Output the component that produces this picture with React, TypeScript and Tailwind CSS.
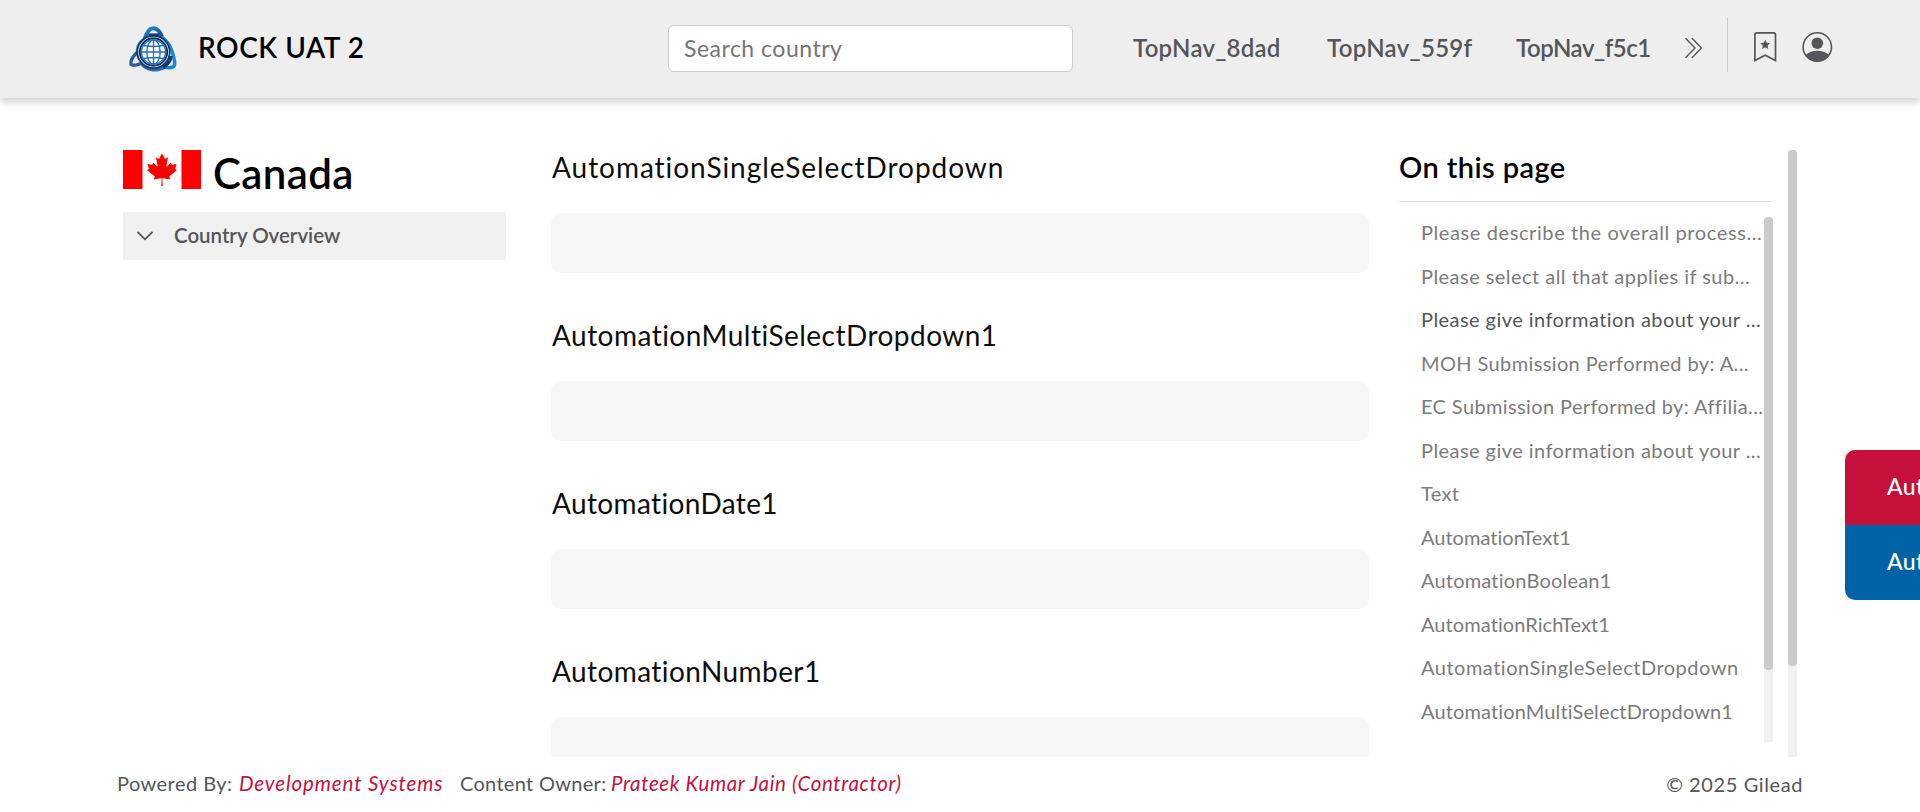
import React from "react";

const NAV = [
  { label: "TopNav_8dad", cls: "w-[194px] tracking-[0.25px]" },
  { label: "TopNav_559f", cls: "w-[189px] tracking-[0.3px]" },
  { label: "TopNav_f5c1", cls: "w-[168px] tracking-[-0.45px]" },
];

const FIELDS = [
  { label: "AutomationSingleSelectDropdown", cls: "tracking-[0.96px]" },
  { label: "AutomationMultiSelectDropdown1", cls: "tracking-[0.47px]" },
  { label: "AutomationDate1", cls: "tracking-[0.36px]" },
  { label: "AutomationNumber1", cls: "tracking-[0.42px]" },
];

const LINKS = [
  { label: "Please describe the overall process...", cls: "tracking-[0.6px]" },
  { label: "Please select all that applies if sub...", cls: "tracking-[0.46px]" },
  { label: "Please give information about your ...", cls: "tracking-[0.44px] text-[#54565b]" },
  { label: "MOH Submission Performed by: A...", cls: "tracking-[0.38px]" },
  { label: "EC Submission Performed by: Affilia...", cls: "tracking-[0.38px]" },
  { label: "Please give information about your ...", cls: "tracking-[0.44px]" },
  { label: "Text", cls: "tracking-[0.3px]" },
  { label: "AutomationText1", cls: "tracking-[0.02px]" },
  { label: "AutomationBoolean1", cls: "tracking-[0.2px]" },
  { label: "AutomationRichText1", cls: "tracking-[0.08px]" },
  { label: "AutomationSingleSelectDropdown", cls: "tracking-[0.5px]" },
  { label: "AutomationMultiSelectDropdown1", cls: "tracking-[0.13px]" },
];

function Logo() {
  return (
    <svg className="h-[48px] w-[50px] shrink-0" viewBox="0 0 50 48" fill="none">
      <defs>
        <linearGradient id="band" x1="0" y1="0" x2="1" y2="1">
          <stop offset="0" stopColor="#1a8ad8" />
          <stop offset="0.55" stopColor="#1466b0" />
          <stop offset="1" stopColor="#12407c" />
        </linearGradient>
      </defs>
      <path d="M11 33 C7.500 24 10.500 17.500 17 14" stroke="#1f8fdc" strokeWidth="3.400" />
      <path d="M16.500 14.500 C18.500 7 22 3.200 25.500 3.200 C29 3.200 32.500 7 34 12" stroke="url(#band)" strokeWidth="4" />
      <path d="M33 12 C41 16 44.500 25 46.500 36 C47.600 42.500 44.500 43.500 36.500 42.200" stroke="#1a86d6" strokeWidth="3.600" />
      <path d="M9.500 27 C5 31 2.300 36 3 39.500 C5 41 10 39.800 15 37.500" stroke="#2a5b9e" strokeWidth="3.400" />
      <path d="M13 37.500 C18 46.500 31 47 39 40.500" stroke="#2b6cb2" strokeWidth="3.400" />
      <path d="M43 31 C43 36 40 39.500 35 42.500" stroke="#14376e" strokeWidth="3" />
      <path d="M20.500 9.700 h10.500" stroke="#173f78" strokeWidth="2.600" />
      <circle cx="25.500" cy="27" r="16.200" fill="#fff" stroke="#16325f" strokeWidth="1.700" />
      <circle cx="25.500" cy="27" r="13.700" fill="#fff" stroke="#12305f" strokeWidth="1.900" />
      <g stroke="#1c74bd" strokeWidth="1.300">
        <circle cx="25.500" cy="27" r="12" />
        <ellipse cx="25.500" cy="27" rx="6.700" ry="12" />
        <path d="M25.500 15 V39 M13.500 27 H37.500 M16 20.500 Q25.500 22.500 35 20.500 M16 33.500 Q25.500 31.500 35 33.500" />
      </g>
    </svg>
  );
}

function Flag() {
  return (
    <svg className="h-[39px] w-[78px] shrink-0" viewBox="0 0 9600 4800">
      <path fill="#f00" d="M0 0h9600v4800H0z" />
      <path
        fill="#fff"
        d="m2400 0h4800v4800h-4800zm2490 4430-45-863a95 95 0 0 1 111-98l859 151-116-320a65 65 0 0 1 20-73l941-762-212-99a65 65 0 0 1-34-79l186-572-542 115a65 65 0 0 1-73-38l-105-247-423 454a65 65 0 0 1-111-57l204-1052-327 189a65 65 0 0 1-91-27l-332-652-332 652a65 65 0 0 1-91 27l-327-189 204 1052a65 65 0 0 1-111 57l-423-454-105 247a65 65 0 0 1-73 38l-542-115 186 572a65 65 0 0 1-34 79l-212 99 941 762a65 65 0 0 1 20 73l-116 320 859-151a95 95 0 0 1 111 98l-45 863z"
      />
    </svg>
  );
}

function Header() {
  return (
    <header className="z-10 flex h-[98px] shrink-0 items-start bg-[#eee] pl-[128px] text-[#54565b] shadow-[0_4px_8px_rgba(0,0,0,0.18)]">
      <div className="flex h-[94px] w-[540px] items-center">
        <div className="mt-[4px]">
          <Logo />
        </div>
        <span className="ml-[20px] text-[28px] font-semibold tracking-[0.55px] text-black">ROCK UAT 2</span>
      </div>
      <div className="mt-[25px] flex h-[47px] w-[405px] items-center rounded-[6px] border border-[#ccc] bg-white pl-[15px] text-[23px] tracking-[0.5px] text-[#757575]">
        Search country
      </div>
      <nav className="mt-[18px] flex h-[60px] items-center pl-[60px] text-[24px] font-semibold">
        {NAV.map((n) => (
          <span key={n.label} className={"whitespace-nowrap " + n.cls}>
            {n.label}
          </span>
        ))}
      </nav>
      <svg className="mt-[36px] h-[24px] w-[20px]" viewBox="0 0 20 24" fill="none" stroke="#54565b" strokeWidth="1.400">
        <path d="M1.500 2.200 L11 12 L1.500 21.800 M8 2.200 L17.500 12 L8 21.800" />
      </svg>
      <div className="mt-[18px] ml-[23px] h-[54px] w-px bg-[#c9c9c9]" />
      <svg className="mt-[31px] ml-[25px] h-[32px] w-[24px]" viewBox="0 0 24 32" fill="none" stroke="#54565b" strokeWidth="1.700">
        <path d="M1.900 29.600 V3.900 Q1.900 1.900 3.900 1.900 H20.500 Q22.500 1.900 22.500 3.900 V29.600 L12.200 24.200 Z" />
        <path
          d="M12.200 8.800 l1.500 3 3.300 .5 -2.400 2.300 .6 3.300 -3 -1.600 -3 1.600 .6 -3.300 -2.400 -2.300 3.300 -.5z"
          fill="#54565b"
          stroke="none"
        />
      </svg>
      <svg className="mt-[31px] ml-[25px] h-[32px] w-[32px]" viewBox="0 0 32 32" fill="none">
        <circle cx="15.300" cy="16" r="14.200" stroke="#54565b" strokeWidth="1.600" />
        <circle cx="15.300" cy="12.200" r="5.800" fill="#54565b" />
        <path d="M3.300 24.600 Q7.500 19.800 15.300 19.800 Q23.100 19.800 27.300 24.600 A14.600 14.600 0 0 1 3.300 24.600 Z" fill="#54565b" />
      </svg>
    </header>
  );
}

export default function App() {
  return (
    <div className="relative flex h-[812px] w-full flex-col overflow-hidden bg-white font-[Lato,sans-serif]">
      <Header />
      <main className="flex h-[659px] shrink-0 pt-[52px] pl-[123px]">
        <aside className="w-[383px]">
          <div className="flex h-[62px] items-start">
            <Flag />
            <h1 className="ml-[12px] pt-[3px] text-[42px] leading-[40px] font-semibold tracking-[0.4px] text-black">Canada</h1>
          </div>
          <div className="flex h-[48px] items-center bg-[#f0f0f0] text-[#54565b]">
            <svg className="ml-[13px] h-[12px] w-[18px]" viewBox="0 0 18 12" fill="none" stroke="#54565b" strokeWidth="1.800">
              <path d="M1.500 1.800 L9 9.300 L16.500 1.800" />
            </svg>
            <span className="mb-[2px] ml-[20px] text-[20.5px] leading-[24px] font-semibold tracking-[-0.02px]">Country Overview</span>
          </div>
        </aside>
        <section className="ml-[45px] flex h-[607px] w-[818px] flex-col overflow-hidden">
          {FIELDS.map((f) => (
            <div key={f.label} className="h-[168px] shrink-0">
              <h2 className={"h-[63px] pl-px text-[28px] leading-[34px] text-[#0d0d0d] " + f.cls}>{f.label}</h2>
              <div className="h-[60px] rounded-[10px] bg-[#f7f7f7]" />
            </div>
          ))}
        </section>
        <aside className="ml-[30px] w-[374px]">
          <h2 className="h-[52px] border-b border-[#e2e2e2] text-[29px] leading-[34px] font-semibold tracking-[0.4px] text-black">
            On this page
          </h2>
          <div className="mt-[15px] flex h-[525px] justify-between pl-[22px]">
            <ul className="flex flex-col gap-[14.5px] text-[20px] leading-[30px] text-[#7b7b7b]">
              {LINKS.map((l, i) => (
                <li key={i} className={"h-[29px] whitespace-nowrap " + l.cls}>
                  {l.label}
                </li>
              ))}
            </ul>
            <div className="w-[9px] shrink-0 rounded-t-[4px] bg-[#f0f0f0]">
              <div className="h-[453px] rounded-[4px] bg-[#cbcbcb]" />
            </div>
          </div>
        </aside>
        <div className="ml-[15px] h-[607px] w-[9px] shrink-0 rounded-t-[4px] bg-[#f0f0f0]">
          <div className="h-[516px] rounded-[4px] bg-[#cbcbcb]" />
        </div>
      </main>
      <footer className="flex h-[55px] items-center justify-between pr-[117px] pb-[2px] pl-[117px] text-[20px] text-[#54565b]">
        <div className="flex whitespace-nowrap">
          <span className="w-[122px] tracking-[0.45px]">Powered By:</span>
          <em className="w-[221px] text-[20.5px] tracking-[0.9px] text-[#c5103c]">Development Systems</em>
          <span className="w-[151px] tracking-[0.3px]">Content Owner:</span>
          <em className="text-[20.5px] tracking-[0.65px] text-[#c5103c]">Prateek Kumar Jain (Contractor)</em>
        </div>
        <span className="tracking-[0.6px]">© 2025 Gilead</span>
      </footer>
      <div className="absolute top-[450px] right-0 w-[75px] overflow-hidden rounded-l-[10px] text-[23px] leading-[73px] font-medium tracking-[0.4px] text-white">
        <div className="h-[75px] bg-[#c5103c] pl-[42px]">Aut</div>
        <div className="h-[75px] bg-[#0063a8] pl-[42px]">Aut</div>
      </div>
    </div>
  );
}
